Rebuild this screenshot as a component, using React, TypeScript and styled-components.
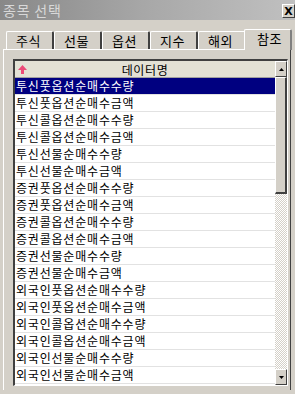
import React, { useState } from 'react';
import styled, { createGlobalStyle } from 'styled-components';

const GlobalStyle = createGlobalStyle`
  html, body {
    margin: 0;
    padding: 0;
    background: #d4d0c8;
  }
  * {
    box-sizing: border-box;
  }
`;

const Window = styled.div`
  width: 295px;
  height: 394px;
  background: #d4d0c8;
  font-family: "Noto Sans CJK KR", "Noto Sans", sans-serif;
  font-size: 12px;
  display: flex;
  flex-direction: column;
  overflow: hidden;
`;

const TitleBar = styled.div`
  height: 20px;
  flex-shrink: 0;
  background: linear-gradient(90deg, #888888 0%, #a8a8a8 50%, #c0c0c0 100%);
  display: flex;
  align-items: center;
  justify-content: space-between;
  padding: 0 0 0 3px;
`;

const Title = styled.div`
  color: #d8d8d8;
  font-size: 14px;
  letter-spacing: 0.8px;
`;

const CloseButton = styled.div`
  width: 13px;
  height: 14px;
  margin-top: 2px;
  background: #d4d0c8;
  border-top: 1px solid #ffffff;
  border-left: 1px solid #ffffff;
  border-right: 1px solid #404040;
  border-bottom: 1px solid #404040;
  display: flex;
  align-items: center;
  justify-content: center;
  font-family: "DejaVu Sans", sans-serif;
  font-weight: bold;
  font-size: 11px;
  line-height: 1;
  color: #000;
`;

const Body = styled.div`
  flex: 1;
  display: flex;
  flex-direction: column;
  padding: 8px 4px 4px 3px;
`;

const TabRow = styled.div`
  display: flex;
  align-items: flex-end;
  height: 21px;
  padding-left: 3px;
`;

const Tab = styled.div<{ $active?: boolean }>`
  width: 48px;
  height: ${p => (p.$active ? 21 : 18)}px;
  margin-right: ${p => (p.$active ? -2 : 0)}px;
  margin-left: ${p => (p.$active ? -2 : 0)}px;
  margin-bottom: ${p => (p.$active ? -1 : 0)}px;
  background: #d4d0c8;
  border-top: 1px solid #ffffff;
  border-left: 1px solid #ffffff;
  border-right: 2px solid ${p => (p.$active ? '#808080' : '#404040')};
  border-top-left-radius: 2px;
  border-top-right-radius: 2px;
  padding-left: ${p => (p.$active ? 12 : 9)}px;
  font-size: 13px;
  letter-spacing: 0.6px;
  line-height: 17px;
  color: #000;
  position: relative;
  z-index: ${p => (p.$active ? 2 : 1)};
`;

const Panel = styled.div`
  flex: 1;
  border-top: 1px solid #ffffff;
  border-left: 1px solid #ffffff;
  border-right: 1px solid #404040;
  padding: 9px 2px 4px 9px;
  display: flex;
`;

const ListBox = styled.div`
  flex: 1;
  display: flex;
  border-top: 2px solid #404040;
  border-left: 2px solid #404040;
  border-right: 1px solid #ffffff;
  border-bottom: 1px solid #ffffff;
  background: #ffffff;
  overflow: hidden;
`;

const ListArea = styled.div`
  flex: 1;
  display: flex;
  flex-direction: column;
  min-width: 0;
`;

const Header = styled.div`
  height: 17px;
  flex-shrink: 0;
  background: #e3e1d5;
  border-bottom: 1px solid #a0a0a0;
  display: flex;
  align-items: center;
  position: relative;
  justify-content: center;
  font-size: 12px;
  letter-spacing: 0.6px;
  color: #000;
`;

const SortArrow = styled.svg`
  position: absolute;
  left: 3px;
  top: 4px;
`;

const Row = styled.div<{ $selected?: boolean }>`
  height: 17px;
  flex-shrink: 0;
  padding-left: 1px;
  line-height: 16px;
  font-size: 12px;
  letter-spacing: 0.8px;
  white-space: nowrap;
  color: ${p => (p.$selected ? '#ffffff' : '#000000')};
  background: ${p => (p.$selected ? '#000080' : '#ffffff')};
  border-bottom: 1px solid #e2e2e2;
  cursor: default;
`;

const ScrollBar = styled.div`
  width: 12px;
  flex-shrink: 0;
  display: flex;
  flex-direction: column;
  background-color: #ffffff;
  background-image: repeating-conic-gradient(#d4d0c8 0% 25%, #ffffff 0% 50%);
  background-size: 2px 2px;
`;

const ScrollButton = styled.div`
  height: 16px;
  flex-shrink: 0;
  background: #d4d0c8;
  border-top: 1px solid #ffffff;
  border-left: 1px solid #ffffff;
  border-right: 1px solid #404040;
  border-bottom: 1px solid #404040;
  display: flex;
  align-items: center;
  justify-content: center;
`;

const Thumb = styled.div`
  height: 117px;
  flex-shrink: 0;
  background: #d4d0c8;
  border-top: 1px solid #ffffff;
  border-left: 1px solid #ffffff;
  border-right: 2px solid #404040;
  border-bottom: 2px solid #404040;
`;

const Track = styled.div`
  flex: 1;
`;

const items = [
  '투신풋옵션순매수수량',
  '투신풋옵션순매수금액',
  '투신콜옵션순매수수량',
  '투신콜옵션순매수금액',
  '투신선물순매수수량',
  '투신선물순매수금액',
  '증권풋옵션순매수수량',
  '증권풋옵션순매수금액',
  '증권콜옵션순매수수량',
  '증권콜옵션순매수금액',
  '증권선물순매수수량',
  '증권선물순매수금액',
  '외국인풋옵션순매수수량',
  '외국인풋옵션순매수금액',
  '외국인콜옵션순매수수량',
  '외국인콜옵션순매수금액',
  '외국인선물순매수수량',
  '외국인선물순매수금액',
];

const tabs = ['주식', '선물', '옵션', '지수', '해외', '참조'];

const App: React.FC = () => {
  const [selected, setSelected] = useState(0);

  return (
    <Window>
      <GlobalStyle />
      <TitleBar>
        <Title>종목 선택</Title>
        <CloseButton>X</CloseButton>
      </TitleBar>
      <Body>
        <TabRow>
          {tabs.map((t) => (
            <Tab key={t} $active={t === '참조'}>{t}</Tab>
          ))}
        </TabRow>
        <Panel>
          <ListBox>
            <ListArea>
              <Header>
                <SortArrow width="9" height="9" viewBox="0 0 9 9">
                  <path d="M4.5 0 L9 5 L6 5 L6 9 L3 9 L3 5 L0 5 Z" fill="#ec4a78" />
                </SortArrow>
                데이터명
              </Header>
              {items.map((item, i) => (
                <Row key={item} $selected={i === selected} onClick={() => setSelected(i)}>
                  {item}
                </Row>
              ))}
            </ListArea>
            <ScrollBar>
              <ScrollButton>
                <svg width="5" height="3" viewBox="0 0 5 3">
                  <path d="M2.5 0 L5 3 L0 3 Z" fill="#000" />
                </svg>
              </ScrollButton>
              <Thumb />
              <Track />
              <ScrollButton>
                <svg width="5" height="3" viewBox="0 0 5 3">
                  <path d="M0 0 L5 0 L2.5 3 Z" fill="#000" />
                </svg>
              </ScrollButton>
            </ScrollBar>
          </ListBox>
        </Panel>
      </Body>
    </Window>
  );
};

export default App;
